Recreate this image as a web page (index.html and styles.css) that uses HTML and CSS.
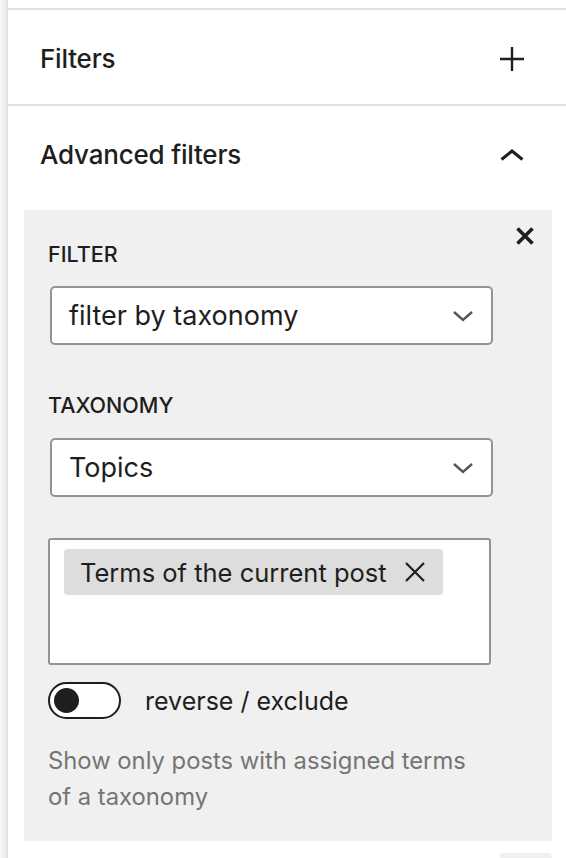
FILE: index.html
```html
<html>

<head>
  <title>Query settings</title>
  <meta charset="UTF-8">
  <meta name="viewport" content="width=device-width, initial-scale=1.0">
  <link rel="stylesheet" href="styles.css">
</head>

<body>
  <div id="sidebar">
    <div class="panel">
      <div class="panel-header">
        <h2>Filters</h2>
        <svg class="icon" width="26" height="26" viewBox="0 0 26 26">
          <path d="M13 1v24M1 13h24" stroke="#1e1e1e" stroke-width="2.4" fill="none" />
        </svg>
      </div>
    </div>

    <div class="panel">
      <div class="panel-header">
        <h2>Advanced filters</h2>
        <svg class="icon" width="26" height="14" viewBox="0 0 26 14">
          <path d="M2.5 11.5L13 3l10.5 8.5" stroke="#1e1e1e" stroke-width="3" fill="none" />
        </svg>
      </div>

      <div class="panel-body">
        <div class="filter-box">
          <button class="remove" title="Remove filter">
            <svg width="20" height="20" viewBox="0 0 20 20">
              <path d="M2.5 2.5l15 15M17.5 2.5l-15 15" stroke="#1e1e1e" stroke-width="3.6" fill="none" />
            </svg>
          </button>

          <label class="field-label">Filter</label>
          <div class="select">
            <span>filter by taxonomy</span>
            <svg width="22" height="12" viewBox="0 0 22 12">
              <path d="M2 2l9 8 9-8" stroke="#555" stroke-width="2.4" fill="none" />
            </svg>
          </div>

          <label class="field-label second">Taxonomy</label>
          <div class="select">
            <span>Topics</span>
            <svg width="22" height="12" viewBox="0 0 22 12">
              <path d="M2 2l9 8 9-8" stroke="#555" stroke-width="2.4" fill="none" />
            </svg>
          </div>

          <div class="token-field">
            <span class="token">
              Terms of the current post
              <svg width="24" height="24" viewBox="0 0 24 24">
                <path d="M3 3l18 18M21 3L3 21" stroke="#1e1e1e" stroke-width="2.2" fill="none" />
              </svg>
            </span>
          </div>

          <div class="toggle-row">
            <span class="toggle"><span class="knob"></span></span>
            <span>reverse / exclude</span>
          </div>

          <p class="help">Show only posts with assigned terms<br>of a taxonomy</p>
        </div>
        <div class="next-button"></div>
      </div>
    </div>
  </div>
</body>

</html>
```

FILE: styles.css
```css
* {
  box-sizing: border-box;
  font-family: Inter, 'Noto Sans', sans-serif;
}

body {
  margin: 0;
  background: linear-gradient(to right, #fafafa 0, #efefef 3px, #ececec 6px);
  color: #1e1e1e;
  overflow: hidden;
}

#sidebar {
  margin-left: 6px;
  min-height: 100vh;
  padding-top: 8px;
  background-color: #fff;
  border-left: 2px solid #e2e2e2;
}

.panel {
  border-top: 2px solid #e0e0e0;
}

.panel-header {
  display: flex;
  align-items: center;
  justify-content: space-between;
  height: 94px;
  padding: 3px 41px 0 32px;
}

.panel-header h2 {
  margin: 0;
  font-size: 26px;
  font-weight: 500;
  letter-spacing: -0.2px;
}

.panel-body {
  padding: 10px 14px 0 16px;
}

.filter-box {
  position: relative;
  background-color: #f0f0f0;
  padding: 32px 24px 26px 24px;
}

.remove {
  position: absolute;
  top: 16px;
  right: 17px;
  padding: 0;
  border: none;
  background: none;
  width: 20px;
  height: 20px;
}

.field-label {
  display: block;
  font-size: 21.5px;
  font-weight: 500;
  line-height: 24px;
  text-transform: uppercase;
}

.field-label.second {
  margin-top: 48px;
}

.select {
  display: flex;
  align-items: center;
  justify-content: space-between;
  width: 443px;
  height: 59px;
  margin: 20px 0 0 2px;
  padding: 0 17px 0 17px;
  background-color: #fff;
  border: 2px solid #949494;
  border-radius: 5px;
  font-size: 27px;
}

.select + .field-label.second + .select {
  margin-top: 21px;
}

.token-field {
  width: 443px;
  height: 127px;
  margin-top: 41px;
  padding: 9px 14px;
  background-color: #fff;
  border: 2px solid #949494;
  border-radius: 3px;
}

.token {
  display: inline-flex;
  align-items: center;
  gap: 16px;
  height: 46px;
  padding: 0 16px 0 16px;
  background-color: #ddd;
  border-radius: 4px;
  font-size: 25.5px;
}

.toggle-row {
  display: flex;
  align-items: center;
  gap: 24px;
  margin-top: 17px;
  font-size: 25px;
}

.toggle {
  display: flex;
  align-items: center;
  width: 73px;
  height: 37px;
  padding-left: 4px;
  border: 2.5px solid #1e1e1e;
  border-radius: 19px;
  background-color: #fff;
}

.knob {
  width: 25px;
  height: 25px;
  border-radius: 50%;
  background-color: #1e1e1e;
}

.help {
  margin: 24px 0 0 0;
  font-size: 23.8px;
  line-height: 36px;
  color: #757575;
}

.next-button {
  width: 52px;
  height: 30px;
  margin: 12px 0 0 auto;
  background-color: #f0f0f0;
  border-radius: 4px;
}
```
